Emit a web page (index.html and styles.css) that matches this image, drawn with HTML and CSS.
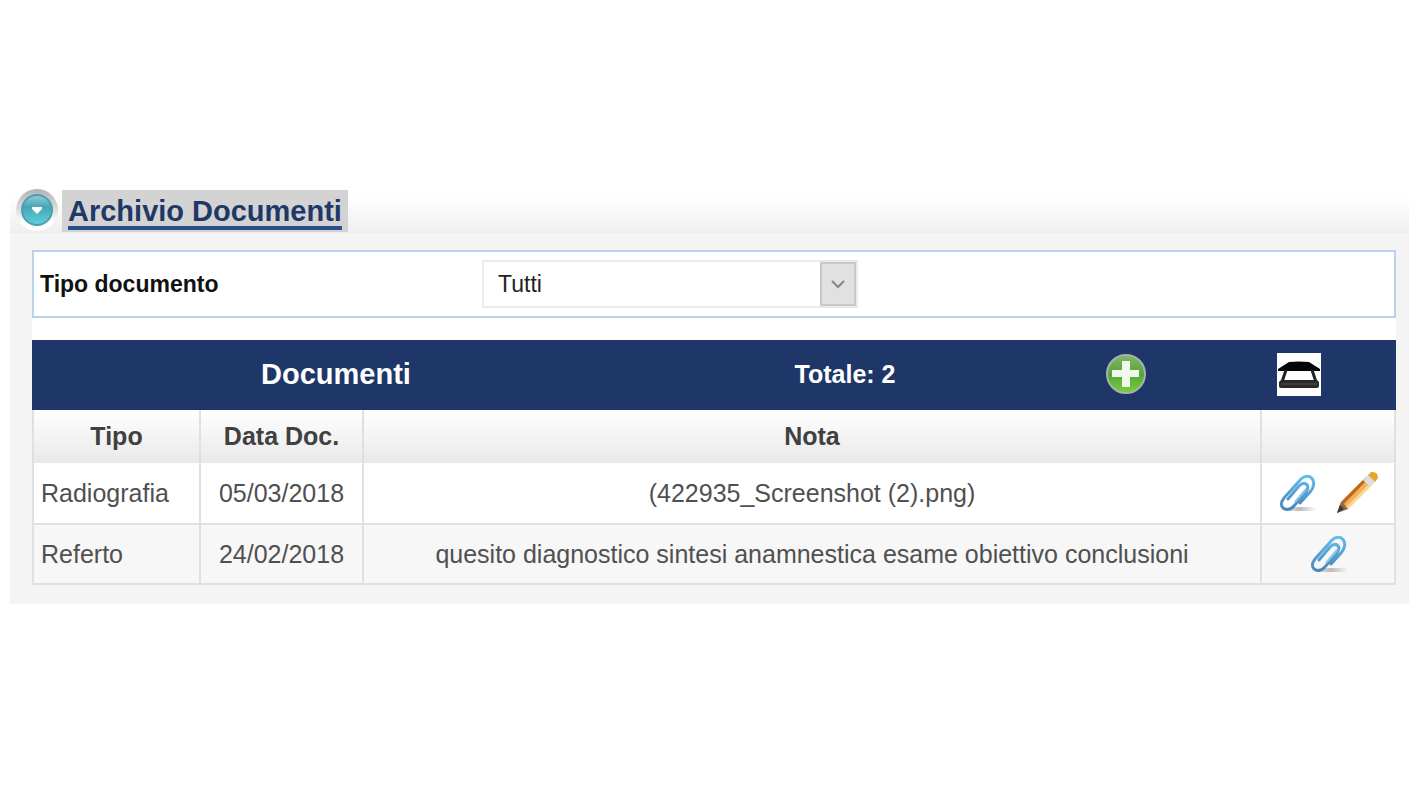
FILE: index.html
```html
<!DOCTYPE html>
<html lang="it">
<head>
    <meta charset="UTF-8">
    <meta name="viewport" content="width=device-width, initial-scale=1.0">
    <title>Archivio Documenti</title>
    <link rel="stylesheet" href="styles.css">
</head>
<body>
    <!-- Shared icon -->
    <svg class="defs" aria-hidden="true">
        <defs>
            <linearGradient id="clipBlue" x1="0" y1="0" x2="0" y2="1">
                <stop offset="0" stop-color="#62bdec"/>
                <stop offset="1" stop-color="#4a86b8"/>
            </linearGradient>
            <linearGradient id="clipShadow">
                <stop offset="0" stop-color="#bbb" stop-opacity="0"/>
                <stop offset="0.5" stop-color="#bbb"/>
                <stop offset="1" stop-color="#bbb" stop-opacity="0"/>
            </linearGradient>
            <symbol id="clip" viewBox="-2 0 40 40">
                <rect x="3" y="34" width="35" height="4" fill="url(#clipShadow)"/>
                <path d="M21 30 L31 19 C40 9 31 -2 22 6 L5 25 C-2 34 7 40 14 34 L27 19 C32 11 25 8 20 13 L9 26" fill="none" stroke="url(#clipBlue)" stroke-width="3" stroke-linecap="round"/>
                <path d="M16 29 L27 16" stroke="#8fc6e8" stroke-width="2" fill="none"/>
            </symbol>
        </defs>
    </svg>

    <div class="panel">
        <div class="panel-title">
            <button type="button" class="toggle" aria-label="Chiudi pannello">
                <svg width="46" height="46" viewBox="0 0 46 46">
                    <defs>
                        <linearGradient id="ring" x1="0" y1="0" x2="0" y2="1">
                            <stop offset="0" stop-color="#b3b3b3"/>
                            <stop offset="0.5" stop-color="#dedede"/>
                            <stop offset="0.8" stop-color="#ffffff"/>
                        </linearGradient>
                        <linearGradient id="ball" x1="0" y1="0" x2="0" y2="1">
                            <stop offset="0" stop-color="#92ced9"/>
                            <stop offset="0.4" stop-color="#48a5b7"/>
                            <stop offset="1" stop-color="#5fd2dc"/>
                        </linearGradient>
                    </defs>
                    <circle cx="23" cy="22" r="21" fill="url(#ring)"/>
                    <circle cx="23" cy="22" r="15" fill="url(#ball)" stroke="#4a9fb0" stroke-width="2"/>
                    <path d="M18 19 H28 V21 L23 26 L18 21 Z" fill="#fff"/>
                </svg>
            </button>
            <h1><a href="#archivio">Archivio Documenti</a></h1>
        </div>

        <div class="panel-body" id="archivio">
            <!-- Filter -->
            <form class="filter">
                <label for="tipoDocumento">Tipo documento</label>
                <div class="select-box">
                    <select id="tipoDocumento" name="tipoDocumento">
                        <option>Tutti</option>
                        <option>Radiografia</option>
                        <option>Referto</option>
                    </select>
                    <span class="arrow">
                        <svg width="14" height="10" viewBox="0 0 14 10"><path d="M1 2 L7 8 L13 2" fill="none" stroke="#858585" stroke-width="2"/></svg>
                    </span>
                </div>
            </form>

            <div class="toolbar">
                <h2>Documenti</h2>
                <span class="total">Totale: 2</span>
                <button type="button" aria-label="Aggiungi documento">
                    <svg width="42" height="42" viewBox="0 0 42 42">
                        <defs>
                            <linearGradient id="green" x1="0" y1="0" x2="0" y2="1">
                                <stop offset="0" stop-color="#83b86c"/>
                                <stop offset="0.5" stop-color="#56a338"/>
                                <stop offset="1" stop-color="#79d039"/>
                            </linearGradient>
                        </defs>
                        <circle cx="21" cy="21" r="19" fill="url(#green)" stroke="#a3b3ad" stroke-width="2"/>
                        <path d="M17 8 H25 V17 H34 V24 H25 V34 H17 V24 H7 V17 H17 Z" fill="#f1f9ed"/>
                    </svg>
                </button>
                <button type="button" aria-label="Scanner">
                    <svg width="44" height="43" viewBox="0 0 44 43">
                        <rect width="44" height="43" fill="#fff"/>
                        <path d="M1 16 L12 9 Q22 8 32 9 L43 16 V18 H1 Z" fill="#050505"/>
                        <path d="M9 17 L5 29 M35 17 L39 29" stroke="#222" stroke-width="3"/>
                        <path d="M4 27 H40 L42 29 V33 Q42 35 40 35 H4 Q2 35 2 33 V29 Z" fill="#292929"/>
                        <path d="M4 31 H40" stroke="#555" stroke-width="1"/>
                    </svg>
                </button>
            </div>

            <table>
                <thead>
                    <tr>
                        <th class="col-type">Tipo</th>
                        <th class="col-date">Data Doc.</th>
                        <th>Nota</th>
                        <th class="col-actions"></th>
                    </tr>
                </thead>
                <tbody>
                    <tr>
                        <td class="type">Radiografia</td>
                        <td>05/03/2018</td>
                        <td>(422935_Screenshot (2).png)</td>
                        <td>
                            <div class="actions">
                                <button type="button" aria-label="Allegato"><svg width="40" height="40"><use href="#clip"/></svg></button>
                                <button type="button" aria-label="Modifica">
                                    <svg width="44" height="44" viewBox="0 0 44 44">
                                        <path d="M2 42 L6 31 L31 6 L38 13 L13 38 Z" fill="#f3b055"/>
                                        <path d="M6 31 L31 6 L33 8 L8 34 Z" fill="#b96a20"/>
                                        <path d="M11 36 L36 11 L38 13 L13 38 Z" fill="#ffd594"/>
                                        <path d="M2 42 L6 31 L9 33 L13 38 Z" fill="#8a6b58"/>
                                        <path d="M2 42 L5 34 L9 38 Z" fill="#3d3a3a"/>
                                        <path d="M28 9 L34 3 L41 10 L35 16 Z" fill="#dcdfe2"/>
                                        <path d="M33 4 L36 1 Q43 0 43 7 L40 11 Z" fill="#e8a72b"/>
                                    </svg>
                                </button>
                            </div>
                        </td>
                    </tr>
                    <tr>
                        <td class="type">Referto</td>
                        <td>24/02/2018</td>
                        <td>quesito diagnostico sintesi anamnestica esame obiettivo conclusioni</td>
                        <td>
                            <div class="actions">
                                <button type="button" aria-label="Allegato"><svg width="40" height="40"><use href="#clip"/></svg></button>
                            </div>
                        </td>
                    </tr>
                </tbody>
            </table>
        </div>
    </div>
</body>
</html>
```
FILE: styles.css
```css
* {
    box-sizing: border-box;
}
body {
    margin: 0;
    padding: 188px 10px 0;
    background-color: #fff;
    font-family: "Liberation Sans", Arial, sans-serif;
}
svg {
    display: block;
}
button {
    padding: 0;
    border: 0;
    background: none;
    cursor: pointer;
}
.defs {
    position: absolute;
    width: 0;
    height: 0;
}
.panel {
    background-color: #f4f4f4;
}
.panel-title {
    display: flex;
    align-items: center;
    gap: 2px;
    height: 46px;
    padding-left: 4px;
    background: linear-gradient(#fff, #fdfdfd 30%, #eee);
}
h1 {
    margin: 0;
    padding: 0 6px;
    background-color: #d3d3d3;
    font-size: 29px;
    line-height: 42px;
}
h1 a {
    color: #1f3868;
    text-decoration: underline;
    text-decoration-color: #27508b;
    text-decoration-thickness: 4px;
    text-underline-offset: 5px;
    text-decoration-skip-ink: none;
}
.panel-body {
    padding: 15px 13px 19px 22px;
    border-top: 1px solid #fafafa;
}
.filter {
    display: grid;
    grid-template-columns: 442px 376px;
    align-items: center;
    height: 68px;
    padding-left: 6px;
    border: 2px solid #b9d1ea;
    background-color: #fff;
}
.filter label {
    color: #111;
    font-size: 23px;
    font-weight: bold;
}
.select-box {
    display: grid;
    grid-template-columns: 1fr 36px;
    height: 48px;
    border: 2px solid #eaeaea;
}
.select-box select {
    grid-area: 1 / 1 / 2 / 3;
    appearance: none;
    padding: 0 14px;
    border: 0;
    border-radius: 0;
    background-color: #fff;
    color: #222;
    font-family: inherit;
    font-size: 23px;
}
.arrow {
    grid-area: 1 / 2;
    display: flex;
    align-items: center;
    justify-content: center;
    border: 2px solid #c8c8c8;
    background-color: #e1e1e1;
    pointer-events: none;
}
.toolbar {
    display: grid;
    grid-template-columns: 608fr 410fr 152fr 194fr;
    align-items: center;
    justify-items: center;
    height: 92px;
    padding-bottom: 2px;
    border-top: 22px solid #fff;
    background-color: #1f3768;
    color: #fff;
}
h2 {
    margin: 0;
    font-size: 29px;
}
.total {
    font-size: 25px;
    font-weight: bold;
}
table {
    width: 100%;
    table-layout: fixed;
    border-collapse: collapse;
    color: #505050;
    font-size: 25px;
}
th, td {
    padding: 0 7px;
    border: 2px solid #e0e0e0;
    text-align: center;
}
th {
    height: 53px;
    border-top: 0;
    border-bottom: 0;
    background: linear-gradient(#fff, #e9e9e9);
    color: #404040;
}
td {
    height: 60px;
    background-color: #fff;
}
tbody tr:first-child td {
    height: 61px;
    border-top: 0;
}
tbody tr:nth-child(even) td {
    background-color: #f7f7f7;
}
.col-type {
    width: 167px;
}
.col-date {
    width: 163px;
}
.col-actions {
    width: 134px;
}
td.type {
    text-align: left;
}
.actions {
    display: flex;
    justify-content: center;
    gap: 18px;
}
```
